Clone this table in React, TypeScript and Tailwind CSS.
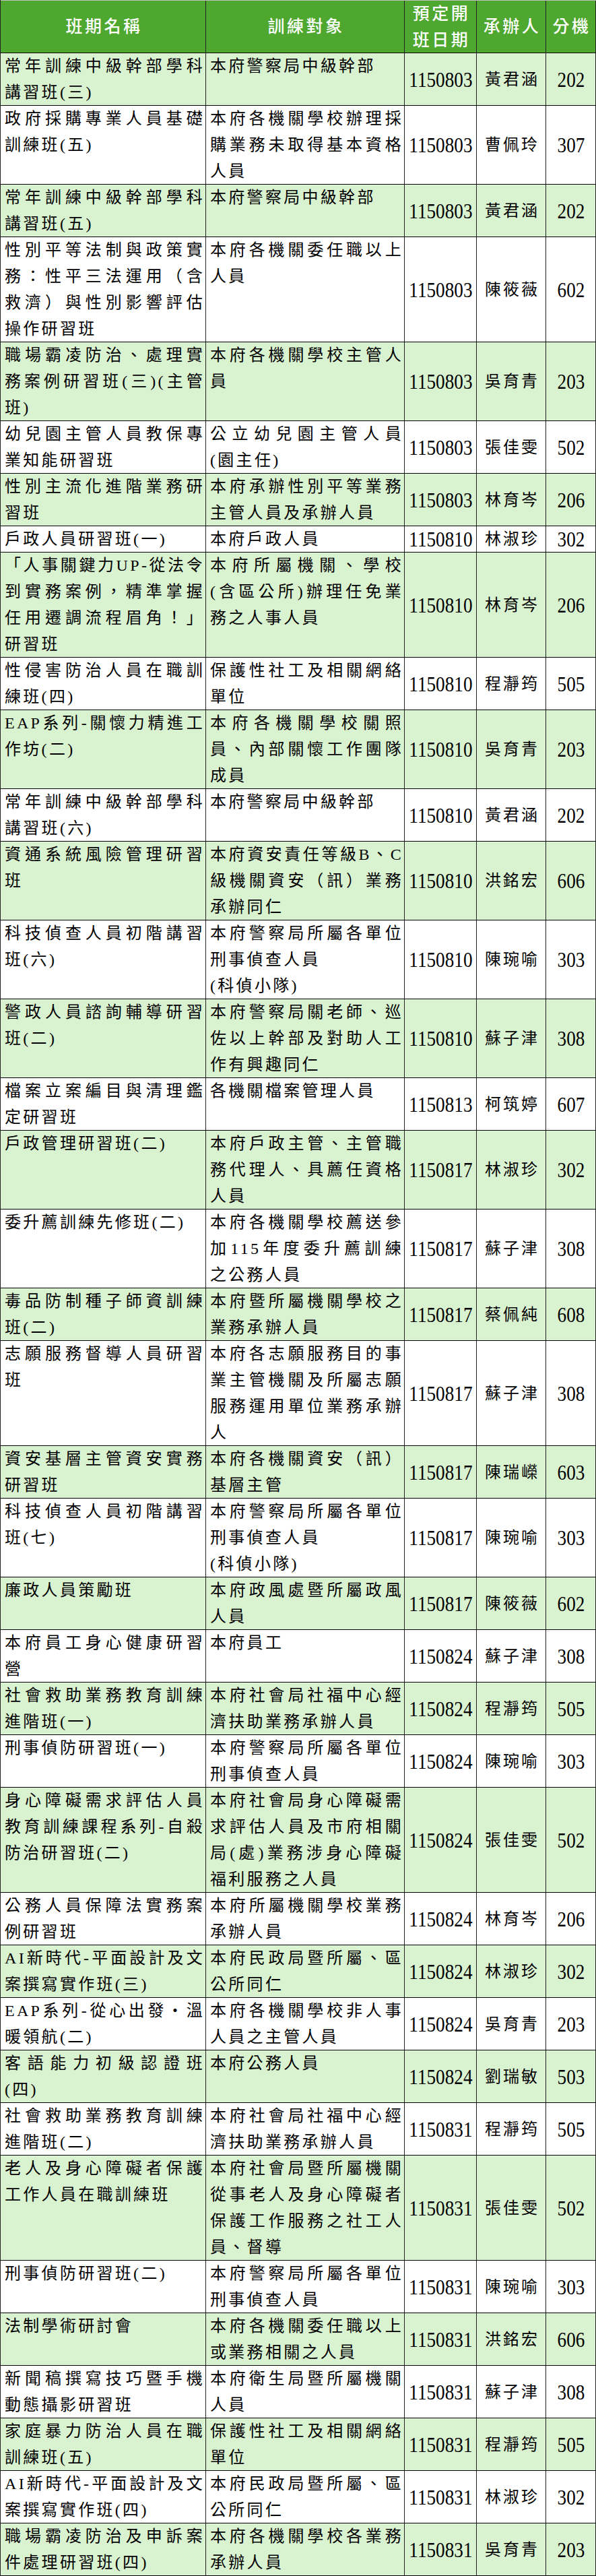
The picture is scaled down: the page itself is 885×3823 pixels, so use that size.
import React from "react";

type Row = { a: string[]; b: string[]; d: string; n: string; e: string };

const rows: Row[] = [
  { a: ["常年訓練中級幹部學科", "講習班(三)"], b: ["本府警察局中級幹部"], d: "1150803", n: "黃君涵", e: "202" },
  { a: ["政府採購專業人員基礎", "訓練班(五)"], b: ["本府各機關學校辦理採", "購業務未取得基本資格", "人員"], d: "1150803", n: "曹佩玲", e: "307" },
  { a: ["常年訓練中級幹部學科", "講習班(五)"], b: ["本府警察局中級幹部"], d: "1150803", n: "黃君涵", e: "202" },
  { a: ["性別平等法制與政策實", "務：性平三法運用（含", "救濟）與性別影響評估", "操作研習班"], b: ["本府各機關委任職以上", "人員"], d: "1150803", n: "陳筱薇", e: "602" },
  { a: ["職場霸凌防治、處理實", "務案例研習班(三)(主管", "班)"], b: ["本府各機關學校主管人", "員"], d: "1150803", n: "吳育青", e: "203" },
  { a: ["幼兒園主管人員教保專", "業知能研習班"], b: ["公立幼兒園主管人員", "(園主任)"], d: "1150803", n: "張佳雯", e: "502" },
  { a: ["性別主流化進階業務研", "習班"], b: ["本府承辦性別平等業務", "主管人員及承辦人員"], d: "1150803", n: "林育岑", e: "206" },
  { a: ["戶政人員研習班(一)"], b: ["本府戶政人員"], d: "1150810", n: "林淑珍", e: "302" },
  { a: ["「人事關鍵力UP-從法令", "到實務案例，精準掌握", "任用遷調流程眉角！」", "研習班"], b: ["本府所屬機關、學校", "(含區公所)辦理任免業", "務之人事人員"], d: "1150810", n: "林育岑", e: "206" },
  { a: ["性侵害防治人員在職訓", "練班(四)"], b: ["保護性社工及相關網絡", "單位"], d: "1150810", n: "程瀞筠", e: "505" },
  { a: ["EAP系列-關懷力精進工", "作坊(二)"], b: ["本府各機關學校關照", "員、內部關懷工作團隊", "成員"], d: "1150810", n: "吳育青", e: "203" },
  { a: ["常年訓練中級幹部學科", "講習班(六)"], b: ["本府警察局中級幹部"], d: "1150810", n: "黃君涵", e: "202" },
  { a: ["資通系統風險管理研習", "班"], b: ["本府資安責任等級B、C", "級機關資安（訊）業務", "承辦同仁"], d: "1150810", n: "洪銘宏", e: "606" },
  { a: ["科技偵查人員初階講習", "班(六)"], b: ["本府警察局所屬各單位", "~刑事偵查人員", "(科偵小隊)"], d: "1150810", n: "陳琬喻", e: "303" },
  { a: ["警政人員諮詢輔導研習", "班(二)"], b: ["本府警察局關老師、巡", "佐以上幹部及對助人工", "作有興趣同仁"], d: "1150810", n: "蘇子津", e: "308" },
  { a: ["檔案立案編目與清理鑑", "定研習班"], b: ["各機關檔案管理人員"], d: "1150813", n: "柯筑婷", e: "607" },
  { a: ["戶政管理研習班(二)"], b: ["本府戶政主管、主管職", "務代理人、具薦任資格", "人員"], d: "1150817", n: "林淑珍", e: "302" },
  { a: ["委升薦訓練先修班(二)"], b: ["本府各機關學校薦送參", "加115年度委升薦訓練", "之公務人員"], d: "1150817", n: "蘇子津", e: "308" },
  { a: ["毒品防制種子師資訓練", "班(二)"], b: ["本府暨所屬機關學校之", "業務承辦人員"], d: "1150817", n: "蔡佩純", e: "608" },
  { a: ["志願服務督導人員研習", "班"], b: ["本府各志願服務目的事", "業主管機關及所屬志願", "服務運用單位業務承辦", "人"], d: "1150817", n: "蘇子津", e: "308" },
  { a: ["資安基層主管資安實務", "研習班"], b: ["本府各機關資安（訊）", "基層主管"], d: "1150817", n: "陳瑞嶸", e: "603" },
  { a: ["科技偵查人員初階講習", "班(七)"], b: ["本府警察局所屬各單位", "~刑事偵查人員", "(科偵小隊)"], d: "1150817", n: "陳琬喻", e: "303" },
  { a: ["廉政人員策勵班"], b: ["本府政風處暨所屬政風", "人員"], d: "1150817", n: "陳筱薇", e: "602" },
  { a: ["本府員工身心健康研習", "營"], b: ["本府員工"], d: "1150824", n: "蘇子津", e: "308" },
  { a: ["社會救助業務教育訓練", "進階班(一)"], b: ["本府社會局社福中心經", "濟扶助業務承辦人員"], d: "1150824", n: "程瀞筠", e: "505" },
  { a: ["刑事偵防研習班(一)"], b: ["本府警察局所屬各單位", "刑事偵查人員"], d: "1150824", n: "陳琬喻", e: "303" },
  { a: ["身心障礙需求評估人員", "教育訓練課程系列-自殺", "防治研習班(二)"], b: ["本府社會局身心障礙需", "求評估人員及市府相關", "局(處)業務涉身心障礙", "福利服務之人員"], d: "1150824", n: "張佳雯", e: "502" },
  { a: ["公務人員保障法實務案", "例研習班"], b: ["本府所屬機關學校業務", "承辦人員"], d: "1150824", n: "林育岑", e: "206" },
  { a: ["AI新時代-平面設計及文", "案撰寫實作班(三)"], b: ["本府民政局暨所屬、區", "公所同仁"], d: "1150824", n: "林淑珍", e: "302" },
  { a: ["EAP系列-從心出發‧溫", "暖領航(二)"], b: ["本府各機關學校非人事", "人員之主管人員"], d: "1150824", n: "吳育青", e: "203" },
  { a: ["客語能力初級認證班", "(四)"], b: ["本府公務人員"], d: "1150824", n: "劉瑞敏", e: "503" },
  { a: ["社會救助業務教育訓練", "進階班(二)"], b: ["本府社會局社福中心經", "濟扶助業務承辦人員"], d: "1150831", n: "程瀞筠", e: "505" },
  { a: ["老人及身心障礙者保護", "工作人員在職訓練班"], b: ["本府社會局暨所屬機關", "從事老人及身心障礙者", "保護工作服務之社工人", "員、督導"], d: "1150831", n: "張佳雯", e: "502" },
  { a: ["刑事偵防研習班(二)"], b: ["本府警察局所屬各單位", "刑事偵查人員"], d: "1150831", n: "陳琬喻", e: "303" },
  { a: ["法制學術研討會"], b: ["本府各機關委任職以上", "或業務相關之人員"], d: "1150831", n: "洪銘宏", e: "606" },
  { a: ["新聞稿撰寫技巧暨手機", "動態攝影研習班"], b: ["本府衛生局暨所屬機關", "人員"], d: "1150831", n: "蘇子津", e: "308" },
  { a: ["家庭暴力防治人員在職", "訓練班(五)"], b: ["保護性社工及相關網絡", "單位"], d: "1150831", n: "程瀞筠", e: "505" },
  { a: ["AI新時代-平面設計及文", "案撰寫實作班(四)"], b: ["本府民政局暨所屬、區", "公所同仁"], d: "1150831", n: "林淑珍", e: "302" },
  { a: ["職場霸凌防治及申訴案", "件處理研習班(四)"], b: ["本府各機關學校各業務", "承辦人員"], d: "1150831", n: "吳育青", e: "203" },
];

function Lines({ lines }: { lines: string[] }) {
  return (
    <div className="mb-[-1px]">
      {lines.map((l, i) => {
        const plain = l.startsWith("~");
        const text = plain ? l.slice(1) : l;
        const justify = !plain && i < lines.length - 1;
        return (
          <div
            key={i}
            className={justify ? "text-justify [text-align-last:justify]" : "text-left"}
          >
            {text}
          </div>
        );
      })}
    </div>
  );
}

function Num({ v }: { v: string }) {
  return (
    <span className="inline-block scale-x-[0.85] text-[32px] leading-[30px] tracking-normal">
      {v}
    </span>
  );
}

export default function App() {
  return (
    <div className="w-[885px] border-l border-[#222] bg-white font-['Liberation_Serif','Noto_Sans_CJK_TC',serif] text-[24px] leading-[39px] tracking-[3.3px] text-black">
      <div className="grid grid-cols-[305px_295px_107px_103px_74px] border-t border-b border-t-[#bfbfbf] border-b-black bg-[#4ea72e] text-[25px] tracking-[3.5px] text-white font-medium">
        <div className="flex items-center justify-center border-r border-[#222] pl-[3px]">班期名稱</div>
        <div className="flex items-center justify-center border-r border-[#222] pl-[3px]">訓練對象</div>
        <div className="border-r border-[#222] pl-[3px] text-center">
          <div className="mb-[-1px]">
            <div>預定開</div>
            <div>班日期</div>
          </div>
        </div>
        <div className="flex items-center justify-center border-r border-[#222] pl-[3px]">承辦人</div>
        <div className="flex items-center justify-center border-r border-[#222] pl-[3px]">分機</div>
      </div>
      {rows.map((r, i) => (
        <div
          key={i}
          className={
            "grid grid-cols-[305px_295px_107px_103px_74px] border-b border-black " +
            (i % 2 === 0 ? "bg-[#d9f2d0]" : "bg-white")
          }
        >
          <div className="border-r border-[#222] pl-[6px] pr-[1px]">
            <Lines lines={r.a} />
          </div>
          <div className="border-r border-[#222] pl-[6px] pr-[1px]">
            <Lines lines={r.b} />
          </div>
          <div className="flex items-center justify-center border-r border-[#222]">
            <Num v={r.d} />
          </div>
          <div className="flex items-center justify-center border-r border-[#222] pl-[3px] tracking-[3px] leading-[30px]">
            {r.n}
          </div>
          <div className="flex items-center justify-center border-r border-[#222]">
            <Num v={r.e} />
          </div>
        </div>
      ))}
    </div>
  );
}
